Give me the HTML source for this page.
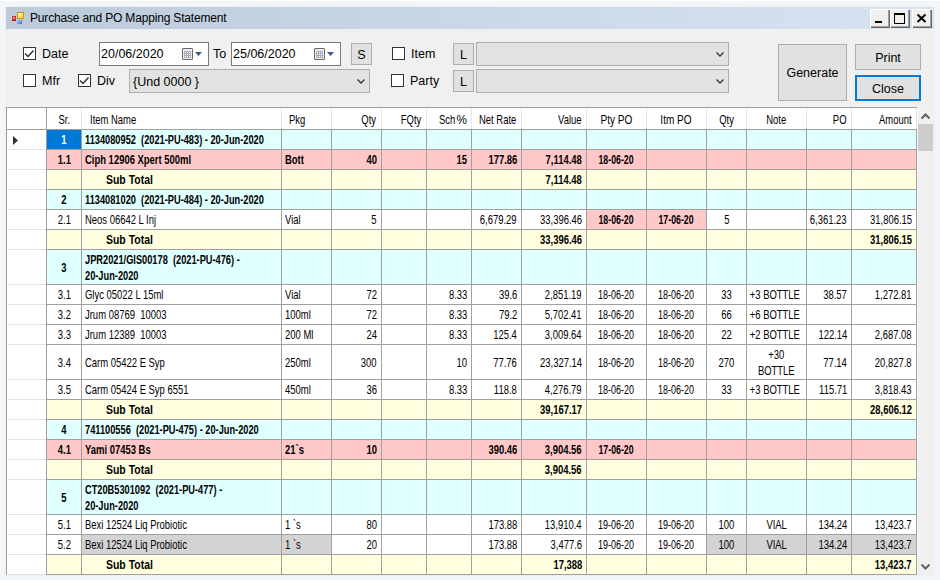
<!DOCTYPE html>
<html><head><meta charset="utf-8">
<style>
html,body{margin:0;padding:0;width:940px;height:580px;overflow:hidden;background:#f2f6fb;}
body{position:relative;font-family:"Liberation Sans", sans-serif;font-size:12px;color:#000;}
.b{position:absolute;}
.t{position:absolute;white-space:nowrap;line-height:15px;font-size:13.5px;}
.t span{display:inline-block;}
.lbl{position:absolute;white-space:nowrap;font-size:12.5px;line-height:14px;}
.ttl{position:absolute;white-space:nowrap;font-size:12px;line-height:14px;}
.cb{position:absolute;width:11px;height:11px;border:1px solid #333;background:#fff;}
.btn{position:absolute;box-sizing:border-box;border:1px solid #adadad;background:#e1e1e1;text-align:center;font-size:12.5px;}
.combo{position:absolute;box-sizing:border-box;border:1px solid #adadad;background:#e2e2e2;}
.dtp{position:absolute;box-sizing:border-box;border:1px solid #7a7a7a;background:#fff;}
</style></head><body>
<div class="b" style="left:0;top:0;width:940px;height:1px;background:#fff"></div>
<div class="b" style="left:5px;top:6px;width:930px;height:570px;background:#f0f0f0"></div>
<div class="b" style="left:6px;top:7px;width:928px;height:22px;background:linear-gradient(to right,#bccbdb,#d6e4f2)"></div>
<!-- app icon -->
<div class="b" style="left:11px;top:11px;width:12px;height:12px;border:1px solid #c8c8c8;box-sizing:content-box"></div>
<div class="b" style="left:17px;top:12px;width:7px;height:7px;background:linear-gradient(135deg,#fff4c0,#ffd21e);border:1px solid #c39a10;box-sizing:border-box"></div>
<div class="b" style="left:12px;top:16px;width:4px;height:5px;background:radial-gradient(circle at 45% 40%,#f4a0a0,#b81010 70%,#900000)"></div>
<div class="b" style="left:17px;top:20px;width:5px;height:4px;background:linear-gradient(135deg,#a8ccff,#3a70e0)"></div>
<div class="ttl" style="left:30px;top:11px;letter-spacing:-0.17px">Purchase and PO Mapping Statement</div>
<!-- window buttons -->
<div class="b" style="left:870px;top:9px;width:20px;height:19px;background:#f0f0f0;box-shadow:inset 1px 1px #fff, inset -1px -1px #696969, inset -2px -2px #a0a0a0"></div>
<div class="b" style="left:875px;top:21px;width:7px;height:2px;background:#000"></div>
<div class="b" style="left:890px;top:9px;width:20px;height:19px;background:#f0f0f0;box-shadow:inset 1px 1px #fff, inset -1px -1px #696969, inset -2px -2px #a0a0a0"></div>
<div class="b" style="left:894px;top:13px;width:9px;height:8px;border:1px solid #000;border-top-width:2px"></div>
<div class="b" style="left:912px;top:9px;width:20px;height:19px;background:#f0f0f0;box-shadow:inset 1px 1px #fff, inset -1px -1px #696969, inset -2px -2px #a0a0a0"></div>
<svg class="b" style="left:912px;top:9px" width="19" height="18"><path d="M5.5 5.5 L13.5 13 M13.5 5.5 L5.5 13" stroke="#000" stroke-width="2"/></svg>

<!-- controls row 1 -->
<div class="cb" style="left:23px;top:47px"></div>
<svg class="b" style="left:23px;top:47px" width="13" height="13"><path d="M2 6.5 L5 9.5 L10.5 3.5" stroke="#333" stroke-width="1.5" fill="none"/></svg>
<div class="lbl" style="left:42px;top:47px">Date</div>
<div class="dtp" style="left:99px;top:42px;width:110px;height:24px"></div>
<div class="lbl" style="left:101px;top:47px">20/06/2020</div>
<div class="lbl" style="left:213px;top:47px">To</div>
<div class="dtp" style="left:231px;top:42px;width:110px;height:24px"></div>
<div class="lbl" style="left:233px;top:47px">25/06/2020</div>
<div class="btn" style="left:351px;top:43px;width:21px;height:22px;line-height:22px">S</div>
<div class="cb" style="left:392px;top:47px"></div>
<div class="lbl" style="left:411px;top:47px">Item</div>
<div class="btn" style="left:453px;top:43px;width:21px;height:22px;line-height:22px">L</div>
<div class="combo" style="left:476px;top:42px;width:253px;height:24px"></div>
<div class="btn" style="left:778px;top:44px;width:69px;height:57px;line-height:57px">Generate</div>
<div class="btn" style="left:855px;top:44px;width:66px;height:26px;line-height:26px">Print</div>
<div class="btn" style="left:855px;top:75px;width:66px;height:26px;line-height:24px;border:2px solid #0078d7">Close</div>
<!-- controls row 2 -->
<div class="cb" style="left:23px;top:74px"></div>
<div class="lbl" style="left:42px;top:74px">Mfr</div>
<div class="cb" style="left:78px;top:74px"></div>
<svg class="b" style="left:78px;top:74px" width="13" height="13"><path d="M2 6.5 L5 9.5 L10.5 3.5" stroke="#333" stroke-width="1.5" fill="none"/></svg>
<div class="lbl" style="left:97px;top:74px">Div</div>
<div class="combo" style="left:129px;top:69px;width:241px;height:24px"></div>
<div class="lbl" style="left:133px;top:75px">{Und 0000 }</div>
<div class="cb" style="left:391px;top:74px"></div>
<div class="lbl" style="left:410px;top:74px">Party</div>
<div class="btn" style="left:453px;top:70px;width:21px;height:22px;line-height:22px">L</div>
<div class="combo" style="left:476px;top:69px;width:253px;height:24px"></div>

<div class="b" style="left:182px;top:48px;width:9px;height:10px;border:1px solid #6e6460;border-radius:1px;background:#eaf0f8"></div><svg class="b" style="left:184px;top:51px" width="7" height="7"><rect x="0" y="0" width="7" height="7" fill="#a9aeb6"/><rect x="1" y="1" width="1" height="1" fill="#fff"/><rect x="1" y="3" width="1" height="1" fill="#fff"/><rect x="1" y="5" width="1" height="1" fill="#fff"/><rect x="3" y="1" width="1" height="1" fill="#fff"/><rect x="3" y="3" width="1" height="1" fill="#fff"/><rect x="3" y="5" width="1" height="1" fill="#fff"/><rect x="5" y="1" width="1" height="1" fill="#fff"/><rect x="5" y="3" width="1" height="1" fill="#fff"/><rect x="5" y="5" width="1" height="1" fill="#fff"/></svg><svg class="b" style="left:195px;top:52px" width="7" height="4"><path d="M0 0 H7 L3.5 4 Z" fill="#3c5a8c"/></svg><div class="b" style="left:314px;top:48px;width:9px;height:10px;border:1px solid #6e6460;border-radius:1px;background:#eaf0f8"></div><svg class="b" style="left:316px;top:51px" width="7" height="7"><rect x="0" y="0" width="7" height="7" fill="#a9aeb6"/><rect x="1" y="1" width="1" height="1" fill="#fff"/><rect x="1" y="3" width="1" height="1" fill="#fff"/><rect x="1" y="5" width="1" height="1" fill="#fff"/><rect x="3" y="1" width="1" height="1" fill="#fff"/><rect x="3" y="3" width="1" height="1" fill="#fff"/><rect x="3" y="5" width="1" height="1" fill="#fff"/><rect x="5" y="1" width="1" height="1" fill="#fff"/><rect x="5" y="3" width="1" height="1" fill="#fff"/><rect x="5" y="5" width="1" height="1" fill="#fff"/></svg><svg class="b" style="left:327px;top:52px" width="7" height="4"><path d="M0 0 H7 L3.5 4 Z" fill="#3c5a8c"/></svg><svg class="b" style="left:715px;top:51px" width="10" height="7"><path d="M1.5 1.5 L5 5 L8.5 1.5" stroke="#333" stroke-width="1.25" fill="none"/></svg><svg class="b" style="left:715px;top:78px" width="10" height="7"><path d="M1.5 1.5 L5 5 L8.5 1.5" stroke="#333" stroke-width="1.25" fill="none"/></svg><svg class="b" style="left:356px;top:78px" width="10" height="7"><path d="M1.5 1.5 L5 5 L8.5 1.5" stroke="#333" stroke-width="1.25" fill="none"/></svg>
<div style="position:absolute;left:6px;top:107px;width:911px;height:468px;background:#fff"></div>
<div class="b" style="left:47px;top:130px;width:869px;height:19px;background:#e0ffff"></div>
<div class="b" style="left:47px;top:130px;width:34px;height:19px;background:#0078d7"></div>
<div class="t" style="left:-136.0px;width:400px;text-align:center;top:132.0px;line-height:15px;font-weight:700;color:#fff"><span style="transform:scaleX(0.7);transform-origin:center">1</span></div>
<div class="t" style="left:85px;top:132.0px;line-height:15px;font-weight:700;color:#000"><span style="transform:scaleX(0.685);transform-origin:left">1134080952&nbsp; (2021-PU-483) - 20-Jun-2020</span></div>
<div class="b" style="left:46px;top:149px;width:871px;height:1px;background:#a0a0a0"></div>
<div class="b" style="left:8px;top:149px;width:38px;height:1px;background:#e3e3e3"></div>
<div class="b" style="left:47px;top:150px;width:869px;height:19px;background:#ffc8c8"></div>
<div class="t" style="left:-136.0px;width:400px;text-align:center;top:152.0px;line-height:15px;font-weight:700;color:#000"><span style="transform:scaleX(0.7);transform-origin:center">1.1</span></div>
<div class="t" style="left:85px;top:152.0px;line-height:15px;font-weight:700;color:#000"><span style="transform:scaleX(0.7);transform-origin:left">Ciph 12906 Xpert 500ml</span></div>
<div class="t" style="left:285px;top:152.0px;line-height:15px;font-weight:700;color:#000"><span style="transform:scaleX(0.7);transform-origin:left">Bott</span></div>
<div class="t" style="right:563px;top:152.0px;line-height:15px;font-weight:700;color:#000"><span style="transform:scaleX(0.7);transform-origin:right">40</span></div>
<div class="t" style="right:473px;top:152.0px;line-height:15px;font-weight:700;color:#000"><span style="transform:scaleX(0.7);transform-origin:right">15</span></div>
<div class="t" style="right:423px;top:152.0px;line-height:15px;font-weight:700;color:#000"><span style="transform:scaleX(0.7);transform-origin:right">177.86</span></div>
<div class="t" style="right:358px;top:152.0px;line-height:15px;font-weight:700;color:#000"><span style="transform:scaleX(0.7);transform-origin:right">7,114.48</span></div>
<div class="t" style="left:416.5px;width:400px;text-align:center;top:152.0px;line-height:15px;font-weight:700;color:#000"><span style="transform:scaleX(0.65);transform-origin:center">18-06-20</span></div>
<div class="b" style="left:46px;top:169px;width:871px;height:1px;background:#a0a0a0"></div>
<div class="b" style="left:8px;top:169px;width:38px;height:1px;background:#e3e3e3"></div>
<div class="b" style="left:47px;top:170px;width:869px;height:19px;background:#ffffe0"></div>
<div class="t" style="left:106px;top:172.0px;line-height:15px;font-weight:700;color:#000"><span style="transform:scaleX(0.775);transform-origin:left">Sub Total</span></div>
<div class="t" style="right:358px;top:172.0px;line-height:15px;font-weight:700;color:#000"><span style="transform:scaleX(0.7);transform-origin:right">7,114.48</span></div>
<div class="b" style="left:46px;top:189px;width:871px;height:1px;background:#a0a0a0"></div>
<div class="b" style="left:8px;top:189px;width:38px;height:1px;background:#e3e3e3"></div>
<div class="b" style="left:47px;top:190px;width:869px;height:19px;background:#e0ffff"></div>
<div class="t" style="left:-136.0px;width:400px;text-align:center;top:192.0px;line-height:15px;font-weight:700;color:#000"><span style="transform:scaleX(0.7);transform-origin:center">2</span></div>
<div class="t" style="left:85px;top:192.0px;line-height:15px;font-weight:700;color:#000"><span style="transform:scaleX(0.685);transform-origin:left">1134081020&nbsp; (2021-PU-484) - 20-Jun-2020</span></div>
<div class="b" style="left:46px;top:209px;width:871px;height:1px;background:#a0a0a0"></div>
<div class="b" style="left:8px;top:209px;width:38px;height:1px;background:#e3e3e3"></div>
<div class="b" style="left:47px;top:210px;width:869px;height:19px;background:#ffffff"></div>
<div class="b" style="left:587px;top:210px;width:59px;height:19px;background:#ffc8c8"></div>
<div class="b" style="left:647px;top:210px;width:59px;height:19px;background:#ffc8c8"></div>
<div class="t" style="left:-136.0px;width:400px;text-align:center;top:212.0px;line-height:15px;font-weight:400;color:#000"><span style="transform:scaleX(0.7);transform-origin:center">2.1</span></div>
<div class="t" style="left:85px;top:212.0px;line-height:15px;font-weight:400;color:#000"><span style="transform:scaleX(0.7);transform-origin:left">Neos 06642 L Inj</span></div>
<div class="t" style="left:285px;top:212.0px;line-height:15px;font-weight:400;color:#000"><span style="transform:scaleX(0.7);transform-origin:left">Vial</span></div>
<div class="t" style="right:563px;top:212.0px;line-height:15px;font-weight:400;color:#000"><span style="transform:scaleX(0.7);transform-origin:right">5</span></div>
<div class="t" style="right:423px;top:212.0px;line-height:15px;font-weight:400;color:#000"><span style="transform:scaleX(0.7);transform-origin:right">6,679.29</span></div>
<div class="t" style="right:358px;top:212.0px;line-height:15px;font-weight:400;color:#000"><span style="transform:scaleX(0.7);transform-origin:right">33,396.46</span></div>
<div class="t" style="left:416.5px;width:400px;text-align:center;top:212.0px;line-height:15px;font-weight:700;color:#000"><span style="transform:scaleX(0.65);transform-origin:center">18-06-20</span></div>
<div class="t" style="left:476.5px;width:400px;text-align:center;top:212.0px;line-height:15px;font-weight:700;color:#000"><span style="transform:scaleX(0.65);transform-origin:center">17-06-20</span></div>
<div class="t" style="left:526.5px;width:400px;text-align:center;top:212.0px;line-height:15px;font-weight:400;color:#000"><span style="transform:scaleX(0.7);transform-origin:center">5</span></div>
<div class="t" style="right:93px;top:212.0px;line-height:15px;font-weight:400;color:#000"><span style="transform:scaleX(0.7);transform-origin:right">6,361.23</span></div>
<div class="t" style="right:28px;top:212.0px;line-height:15px;font-weight:400;color:#000"><span style="transform:scaleX(0.7);transform-origin:right">31,806.15</span></div>
<div class="b" style="left:46px;top:229px;width:871px;height:1px;background:#a0a0a0"></div>
<div class="b" style="left:8px;top:229px;width:38px;height:1px;background:#e3e3e3"></div>
<div class="b" style="left:47px;top:230px;width:869px;height:19px;background:#ffffe0"></div>
<div class="t" style="left:106px;top:232.0px;line-height:15px;font-weight:700;color:#000"><span style="transform:scaleX(0.775);transform-origin:left">Sub Total</span></div>
<div class="t" style="right:358px;top:232.0px;line-height:15px;font-weight:700;color:#000"><span style="transform:scaleX(0.7);transform-origin:right">33,396.46</span></div>
<div class="t" style="right:28px;top:232.0px;line-height:15px;font-weight:700;color:#000"><span style="transform:scaleX(0.7);transform-origin:right">31,806.15</span></div>
<div class="b" style="left:46px;top:249px;width:871px;height:1px;background:#a0a0a0"></div>
<div class="b" style="left:8px;top:249px;width:38px;height:1px;background:#e3e3e3"></div>
<div class="b" style="left:47px;top:250px;width:869px;height:34px;background:#e0ffff"></div>
<div class="t" style="left:-136.0px;width:400px;text-align:center;top:259.5px;line-height:15px;font-weight:700;color:#000"><span style="transform:scaleX(0.7);transform-origin:center">3</span></div>
<div class="t" style="left:85px;top:252.0px;line-height:16px;font-weight:700;color:#000"><span style="transform:scaleX(0.685);transform-origin:left">JPR2021/GIS00178&nbsp; (2021-PU-476) -<br>20-Jun-2020</span></div>
<div class="b" style="left:46px;top:284px;width:871px;height:1px;background:#a0a0a0"></div>
<div class="b" style="left:8px;top:284px;width:38px;height:1px;background:#e3e3e3"></div>
<div class="b" style="left:47px;top:285px;width:869px;height:19px;background:#ffffff"></div>
<div class="t" style="left:-136.0px;width:400px;text-align:center;top:287.0px;line-height:15px;font-weight:400;color:#000"><span style="transform:scaleX(0.7);transform-origin:center">3.1</span></div>
<div class="t" style="left:85px;top:287.0px;line-height:15px;font-weight:400;color:#000"><span style="transform:scaleX(0.7);transform-origin:left">Glyc 05022 L 15ml</span></div>
<div class="t" style="left:285px;top:287.0px;line-height:15px;font-weight:400;color:#000"><span style="transform:scaleX(0.7);transform-origin:left">Vial</span></div>
<div class="t" style="right:563px;top:287.0px;line-height:15px;font-weight:400;color:#000"><span style="transform:scaleX(0.7);transform-origin:right">72</span></div>
<div class="t" style="right:473px;top:287.0px;line-height:15px;font-weight:400;color:#000"><span style="transform:scaleX(0.7);transform-origin:right">8.33</span></div>
<div class="t" style="right:423px;top:287.0px;line-height:15px;font-weight:400;color:#000"><span style="transform:scaleX(0.7);transform-origin:right">39.6</span></div>
<div class="t" style="right:358px;top:287.0px;line-height:15px;font-weight:400;color:#000"><span style="transform:scaleX(0.7);transform-origin:right">2,851.19</span></div>
<div class="t" style="left:416.5px;width:400px;text-align:center;top:287.0px;line-height:15px;font-weight:400;color:#000"><span style="transform:scaleX(0.665);transform-origin:center">18-06-20</span></div>
<div class="t" style="left:476.5px;width:400px;text-align:center;top:287.0px;line-height:15px;font-weight:400;color:#000"><span style="transform:scaleX(0.665);transform-origin:center">18-06-20</span></div>
<div class="t" style="left:526.5px;width:400px;text-align:center;top:287.0px;line-height:15px;font-weight:400;color:#000"><span style="transform:scaleX(0.7);transform-origin:center">33</span></div>
<div class="t" style="left:574.5px;width:400px;text-align:center;top:287.0px;line-height:15px;font-weight:400;color:#000"><span style="transform:scaleX(0.7);transform-origin:center">+3 BOTTLE</span></div>
<div class="t" style="right:93px;top:287.0px;line-height:15px;font-weight:400;color:#000"><span style="transform:scaleX(0.7);transform-origin:right">38.57</span></div>
<div class="t" style="right:28px;top:287.0px;line-height:15px;font-weight:400;color:#000"><span style="transform:scaleX(0.7);transform-origin:right">1,272.81</span></div>
<div class="b" style="left:46px;top:304px;width:871px;height:1px;background:#a0a0a0"></div>
<div class="b" style="left:8px;top:304px;width:38px;height:1px;background:#e3e3e3"></div>
<div class="b" style="left:47px;top:305px;width:869px;height:19px;background:#ffffff"></div>
<div class="t" style="left:-136.0px;width:400px;text-align:center;top:307.0px;line-height:15px;font-weight:400;color:#000"><span style="transform:scaleX(0.7);transform-origin:center">3.2</span></div>
<div class="t" style="left:85px;top:307.0px;line-height:15px;font-weight:400;color:#000"><span style="transform:scaleX(0.7);transform-origin:left">Jrum 08769&nbsp; 10003</span></div>
<div class="t" style="left:285px;top:307.0px;line-height:15px;font-weight:400;color:#000"><span style="transform:scaleX(0.7);transform-origin:left">100ml</span></div>
<div class="t" style="right:563px;top:307.0px;line-height:15px;font-weight:400;color:#000"><span style="transform:scaleX(0.7);transform-origin:right">72</span></div>
<div class="t" style="right:473px;top:307.0px;line-height:15px;font-weight:400;color:#000"><span style="transform:scaleX(0.7);transform-origin:right">8.33</span></div>
<div class="t" style="right:423px;top:307.0px;line-height:15px;font-weight:400;color:#000"><span style="transform:scaleX(0.7);transform-origin:right">79.2</span></div>
<div class="t" style="right:358px;top:307.0px;line-height:15px;font-weight:400;color:#000"><span style="transform:scaleX(0.7);transform-origin:right">5,702.41</span></div>
<div class="t" style="left:416.5px;width:400px;text-align:center;top:307.0px;line-height:15px;font-weight:400;color:#000"><span style="transform:scaleX(0.665);transform-origin:center">18-06-20</span></div>
<div class="t" style="left:476.5px;width:400px;text-align:center;top:307.0px;line-height:15px;font-weight:400;color:#000"><span style="transform:scaleX(0.665);transform-origin:center">18-06-20</span></div>
<div class="t" style="left:526.5px;width:400px;text-align:center;top:307.0px;line-height:15px;font-weight:400;color:#000"><span style="transform:scaleX(0.7);transform-origin:center">66</span></div>
<div class="t" style="left:574.5px;width:400px;text-align:center;top:307.0px;line-height:15px;font-weight:400;color:#000"><span style="transform:scaleX(0.7);transform-origin:center">+6 BOTTLE</span></div>
<div class="b" style="left:46px;top:324px;width:871px;height:1px;background:#a0a0a0"></div>
<div class="b" style="left:8px;top:324px;width:38px;height:1px;background:#e3e3e3"></div>
<div class="b" style="left:47px;top:325px;width:869px;height:19px;background:#ffffff"></div>
<div class="t" style="left:-136.0px;width:400px;text-align:center;top:327.0px;line-height:15px;font-weight:400;color:#000"><span style="transform:scaleX(0.7);transform-origin:center">3.3</span></div>
<div class="t" style="left:85px;top:327.0px;line-height:15px;font-weight:400;color:#000"><span style="transform:scaleX(0.7);transform-origin:left">Jrum 12389&nbsp; 10003</span></div>
<div class="t" style="left:285px;top:327.0px;line-height:15px;font-weight:400;color:#000"><span style="transform:scaleX(0.7);transform-origin:left">200 Ml</span></div>
<div class="t" style="right:563px;top:327.0px;line-height:15px;font-weight:400;color:#000"><span style="transform:scaleX(0.7);transform-origin:right">24</span></div>
<div class="t" style="right:473px;top:327.0px;line-height:15px;font-weight:400;color:#000"><span style="transform:scaleX(0.7);transform-origin:right">8.33</span></div>
<div class="t" style="right:423px;top:327.0px;line-height:15px;font-weight:400;color:#000"><span style="transform:scaleX(0.7);transform-origin:right">125.4</span></div>
<div class="t" style="right:358px;top:327.0px;line-height:15px;font-weight:400;color:#000"><span style="transform:scaleX(0.7);transform-origin:right">3,009.64</span></div>
<div class="t" style="left:416.5px;width:400px;text-align:center;top:327.0px;line-height:15px;font-weight:400;color:#000"><span style="transform:scaleX(0.665);transform-origin:center">18-06-20</span></div>
<div class="t" style="left:476.5px;width:400px;text-align:center;top:327.0px;line-height:15px;font-weight:400;color:#000"><span style="transform:scaleX(0.665);transform-origin:center">18-06-20</span></div>
<div class="t" style="left:526.5px;width:400px;text-align:center;top:327.0px;line-height:15px;font-weight:400;color:#000"><span style="transform:scaleX(0.7);transform-origin:center">22</span></div>
<div class="t" style="left:574.5px;width:400px;text-align:center;top:327.0px;line-height:15px;font-weight:400;color:#000"><span style="transform:scaleX(0.7);transform-origin:center">+2 BOTTLE</span></div>
<div class="t" style="right:93px;top:327.0px;line-height:15px;font-weight:400;color:#000"><span style="transform:scaleX(0.7);transform-origin:right">122.14</span></div>
<div class="t" style="right:28px;top:327.0px;line-height:15px;font-weight:400;color:#000"><span style="transform:scaleX(0.7);transform-origin:right">2,687.08</span></div>
<div class="b" style="left:46px;top:344px;width:871px;height:1px;background:#a0a0a0"></div>
<div class="b" style="left:8px;top:344px;width:38px;height:1px;background:#e3e3e3"></div>
<div class="b" style="left:47px;top:345px;width:869px;height:34px;background:#ffffff"></div>
<div class="t" style="left:-136.0px;width:400px;text-align:center;top:354.5px;line-height:15px;font-weight:400;color:#000"><span style="transform:scaleX(0.7);transform-origin:center">3.4</span></div>
<div class="t" style="left:85px;top:354.5px;line-height:15px;font-weight:400;color:#000"><span style="transform:scaleX(0.7);transform-origin:left">Carm 05422 E Syp</span></div>
<div class="t" style="left:285px;top:354.5px;line-height:15px;font-weight:400;color:#000"><span style="transform:scaleX(0.7);transform-origin:left">250ml</span></div>
<div class="t" style="right:563px;top:354.5px;line-height:15px;font-weight:400;color:#000"><span style="transform:scaleX(0.7);transform-origin:right">300</span></div>
<div class="t" style="right:473px;top:354.5px;line-height:15px;font-weight:400;color:#000"><span style="transform:scaleX(0.7);transform-origin:right">10</span></div>
<div class="t" style="right:423px;top:354.5px;line-height:15px;font-weight:400;color:#000"><span style="transform:scaleX(0.7);transform-origin:right">77.76</span></div>
<div class="t" style="right:358px;top:354.5px;line-height:15px;font-weight:400;color:#000"><span style="transform:scaleX(0.7);transform-origin:right">23,327.14</span></div>
<div class="t" style="left:416.5px;width:400px;text-align:center;top:354.5px;line-height:15px;font-weight:400;color:#000"><span style="transform:scaleX(0.665);transform-origin:center">18-06-20</span></div>
<div class="t" style="left:476.5px;width:400px;text-align:center;top:354.5px;line-height:15px;font-weight:400;color:#000"><span style="transform:scaleX(0.665);transform-origin:center">18-06-20</span></div>
<div class="t" style="left:526.5px;width:400px;text-align:center;top:354.5px;line-height:15px;font-weight:400;color:#000"><span style="transform:scaleX(0.7);transform-origin:center">270</span></div>
<div class="t" style="left:576.5px;width:400px;text-align:center;top:347.0px;line-height:16px;font-weight:400;color:#000"><span style="transform:scaleX(0.7);transform-origin:center">+30<br>BOTTLE</span></div>
<div class="t" style="right:93px;top:354.5px;line-height:15px;font-weight:400;color:#000"><span style="transform:scaleX(0.7);transform-origin:right">77.14</span></div>
<div class="t" style="right:28px;top:354.5px;line-height:15px;font-weight:400;color:#000"><span style="transform:scaleX(0.7);transform-origin:right">20,827.8</span></div>
<div class="b" style="left:46px;top:379px;width:871px;height:1px;background:#a0a0a0"></div>
<div class="b" style="left:8px;top:379px;width:38px;height:1px;background:#e3e3e3"></div>
<div class="b" style="left:47px;top:380px;width:869px;height:19px;background:#ffffff"></div>
<div class="t" style="left:-136.0px;width:400px;text-align:center;top:382.0px;line-height:15px;font-weight:400;color:#000"><span style="transform:scaleX(0.7);transform-origin:center">3.5</span></div>
<div class="t" style="left:85px;top:382.0px;line-height:15px;font-weight:400;color:#000"><span style="transform:scaleX(0.7);transform-origin:left">Carm 05424 E Syp 6551</span></div>
<div class="t" style="left:285px;top:382.0px;line-height:15px;font-weight:400;color:#000"><span style="transform:scaleX(0.7);transform-origin:left">450ml</span></div>
<div class="t" style="right:563px;top:382.0px;line-height:15px;font-weight:400;color:#000"><span style="transform:scaleX(0.7);transform-origin:right">36</span></div>
<div class="t" style="right:473px;top:382.0px;line-height:15px;font-weight:400;color:#000"><span style="transform:scaleX(0.7);transform-origin:right">8.33</span></div>
<div class="t" style="right:423px;top:382.0px;line-height:15px;font-weight:400;color:#000"><span style="transform:scaleX(0.7);transform-origin:right">118.8</span></div>
<div class="t" style="right:358px;top:382.0px;line-height:15px;font-weight:400;color:#000"><span style="transform:scaleX(0.7);transform-origin:right">4,276.79</span></div>
<div class="t" style="left:416.5px;width:400px;text-align:center;top:382.0px;line-height:15px;font-weight:400;color:#000"><span style="transform:scaleX(0.665);transform-origin:center">18-06-20</span></div>
<div class="t" style="left:476.5px;width:400px;text-align:center;top:382.0px;line-height:15px;font-weight:400;color:#000"><span style="transform:scaleX(0.665);transform-origin:center">18-06-20</span></div>
<div class="t" style="left:526.5px;width:400px;text-align:center;top:382.0px;line-height:15px;font-weight:400;color:#000"><span style="transform:scaleX(0.7);transform-origin:center">33</span></div>
<div class="t" style="left:574.5px;width:400px;text-align:center;top:382.0px;line-height:15px;font-weight:400;color:#000"><span style="transform:scaleX(0.7);transform-origin:center">+3 BOTTLE</span></div>
<div class="t" style="right:93px;top:382.0px;line-height:15px;font-weight:400;color:#000"><span style="transform:scaleX(0.7);transform-origin:right">115.71</span></div>
<div class="t" style="right:28px;top:382.0px;line-height:15px;font-weight:400;color:#000"><span style="transform:scaleX(0.7);transform-origin:right">3,818.43</span></div>
<div class="b" style="left:46px;top:399px;width:871px;height:1px;background:#a0a0a0"></div>
<div class="b" style="left:8px;top:399px;width:38px;height:1px;background:#e3e3e3"></div>
<div class="b" style="left:47px;top:400px;width:869px;height:19px;background:#ffffe0"></div>
<div class="t" style="left:106px;top:402.0px;line-height:15px;font-weight:700;color:#000"><span style="transform:scaleX(0.775);transform-origin:left">Sub Total</span></div>
<div class="t" style="right:358px;top:402.0px;line-height:15px;font-weight:700;color:#000"><span style="transform:scaleX(0.7);transform-origin:right">39,167.17</span></div>
<div class="t" style="right:28px;top:402.0px;line-height:15px;font-weight:700;color:#000"><span style="transform:scaleX(0.7);transform-origin:right">28,606.12</span></div>
<div class="b" style="left:46px;top:419px;width:871px;height:1px;background:#a0a0a0"></div>
<div class="b" style="left:8px;top:419px;width:38px;height:1px;background:#e3e3e3"></div>
<div class="b" style="left:47px;top:420px;width:869px;height:19px;background:#e0ffff"></div>
<div class="t" style="left:-136.0px;width:400px;text-align:center;top:422.0px;line-height:15px;font-weight:700;color:#000"><span style="transform:scaleX(0.7);transform-origin:center">4</span></div>
<div class="t" style="left:85px;top:422.0px;line-height:15px;font-weight:700;color:#000"><span style="transform:scaleX(0.685);transform-origin:left">741100556&nbsp; (2021-PU-475) - 20-Jun-2020</span></div>
<div class="b" style="left:46px;top:439px;width:871px;height:1px;background:#a0a0a0"></div>
<div class="b" style="left:8px;top:439px;width:38px;height:1px;background:#e3e3e3"></div>
<div class="b" style="left:47px;top:440px;width:869px;height:19px;background:#ffc8c8"></div>
<div class="t" style="left:-136.0px;width:400px;text-align:center;top:442.0px;line-height:15px;font-weight:700;color:#000"><span style="transform:scaleX(0.7);transform-origin:center">4.1</span></div>
<div class="t" style="left:85px;top:442.0px;line-height:15px;font-weight:700;color:#000"><span style="transform:scaleX(0.7);transform-origin:left">Yami 07453 Bs</span></div>
<div class="t" style="left:285px;top:442.0px;line-height:15px;font-weight:700;color:#000"><span style="transform:scaleX(0.7);transform-origin:left">21`s</span></div>
<div class="t" style="right:563px;top:442.0px;line-height:15px;font-weight:700;color:#000"><span style="transform:scaleX(0.7);transform-origin:right">10</span></div>
<div class="t" style="right:423px;top:442.0px;line-height:15px;font-weight:700;color:#000"><span style="transform:scaleX(0.7);transform-origin:right">390.46</span></div>
<div class="t" style="right:358px;top:442.0px;line-height:15px;font-weight:700;color:#000"><span style="transform:scaleX(0.7);transform-origin:right">3,904.56</span></div>
<div class="t" style="left:416.5px;width:400px;text-align:center;top:442.0px;line-height:15px;font-weight:700;color:#000"><span style="transform:scaleX(0.65);transform-origin:center">17-06-20</span></div>
<div class="b" style="left:46px;top:459px;width:871px;height:1px;background:#a0a0a0"></div>
<div class="b" style="left:8px;top:459px;width:38px;height:1px;background:#e3e3e3"></div>
<div class="b" style="left:47px;top:460px;width:869px;height:19px;background:#ffffe0"></div>
<div class="t" style="left:106px;top:462.0px;line-height:15px;font-weight:700;color:#000"><span style="transform:scaleX(0.775);transform-origin:left">Sub Total</span></div>
<div class="t" style="right:358px;top:462.0px;line-height:15px;font-weight:700;color:#000"><span style="transform:scaleX(0.7);transform-origin:right">3,904.56</span></div>
<div class="b" style="left:46px;top:479px;width:871px;height:1px;background:#a0a0a0"></div>
<div class="b" style="left:8px;top:479px;width:38px;height:1px;background:#e3e3e3"></div>
<div class="b" style="left:47px;top:480px;width:869px;height:34px;background:#e0ffff"></div>
<div class="t" style="left:-136.0px;width:400px;text-align:center;top:489.5px;line-height:15px;font-weight:700;color:#000"><span style="transform:scaleX(0.7);transform-origin:center">5</span></div>
<div class="t" style="left:85px;top:482.0px;line-height:16px;font-weight:700;color:#000"><span style="transform:scaleX(0.685);transform-origin:left">CT20B5301092&nbsp; (2021-PU-477) -<br>20-Jun-2020</span></div>
<div class="b" style="left:46px;top:514px;width:871px;height:1px;background:#a0a0a0"></div>
<div class="b" style="left:8px;top:514px;width:38px;height:1px;background:#e3e3e3"></div>
<div class="b" style="left:47px;top:515px;width:869px;height:19px;background:#ffffff"></div>
<div class="t" style="left:-136.0px;width:400px;text-align:center;top:517.0px;line-height:15px;font-weight:400;color:#000"><span style="transform:scaleX(0.7);transform-origin:center">5.1</span></div>
<div class="t" style="left:85px;top:517.0px;line-height:15px;font-weight:400;color:#000"><span style="transform:scaleX(0.7);transform-origin:left">Bexi 12524 Liq Probiotic</span></div>
<div class="t" style="left:285px;top:517.0px;line-height:15px;font-weight:400;color:#000"><span style="transform:scaleX(0.7);transform-origin:left">1 `s</span></div>
<div class="t" style="right:563px;top:517.0px;line-height:15px;font-weight:400;color:#000"><span style="transform:scaleX(0.7);transform-origin:right">80</span></div>
<div class="t" style="right:423px;top:517.0px;line-height:15px;font-weight:400;color:#000"><span style="transform:scaleX(0.7);transform-origin:right">173.88</span></div>
<div class="t" style="right:358px;top:517.0px;line-height:15px;font-weight:400;color:#000"><span style="transform:scaleX(0.7);transform-origin:right">13,910.4</span></div>
<div class="t" style="left:416.5px;width:400px;text-align:center;top:517.0px;line-height:15px;font-weight:400;color:#000"><span style="transform:scaleX(0.665);transform-origin:center">19-06-20</span></div>
<div class="t" style="left:476.5px;width:400px;text-align:center;top:517.0px;line-height:15px;font-weight:400;color:#000"><span style="transform:scaleX(0.665);transform-origin:center">19-06-20</span></div>
<div class="t" style="left:526.5px;width:400px;text-align:center;top:517.0px;line-height:15px;font-weight:400;color:#000"><span style="transform:scaleX(0.7);transform-origin:center">100</span></div>
<div class="t" style="left:576.5px;width:400px;text-align:center;top:517.0px;line-height:15px;font-weight:400;color:#000"><span style="transform:scaleX(0.7);transform-origin:center">VIAL</span></div>
<div class="t" style="right:93px;top:517.0px;line-height:15px;font-weight:400;color:#000"><span style="transform:scaleX(0.7);transform-origin:right">134.24</span></div>
<div class="t" style="right:28px;top:517.0px;line-height:15px;font-weight:400;color:#000"><span style="transform:scaleX(0.7);transform-origin:right">13,423.7</span></div>
<div class="b" style="left:46px;top:534px;width:871px;height:1px;background:#a0a0a0"></div>
<div class="b" style="left:8px;top:534px;width:38px;height:1px;background:#e3e3e3"></div>
<div class="b" style="left:47px;top:535px;width:869px;height:19px;background:#ffffff"></div>
<div class="b" style="left:82px;top:535px;width:199px;height:19px;background:#d3d3d3"></div>
<div class="b" style="left:282px;top:535px;width:49px;height:19px;background:#d3d3d3"></div>
<div class="b" style="left:707px;top:535px;width:39px;height:19px;background:#d3d3d3"></div>
<div class="b" style="left:747px;top:535px;width:59px;height:19px;background:#d3d3d3"></div>
<div class="b" style="left:807px;top:535px;width:44px;height:19px;background:#d3d3d3"></div>
<div class="b" style="left:852px;top:535px;width:64px;height:19px;background:#d3d3d3"></div>
<div class="t" style="left:-136.0px;width:400px;text-align:center;top:537.0px;line-height:15px;font-weight:400;color:#000"><span style="transform:scaleX(0.7);transform-origin:center">5.2</span></div>
<div class="t" style="left:85px;top:537.0px;line-height:15px;font-weight:400;color:#000"><span style="transform:scaleX(0.7);transform-origin:left">Bexi 12524 Liq Probiotic</span></div>
<div class="t" style="left:285px;top:537.0px;line-height:15px;font-weight:400;color:#000"><span style="transform:scaleX(0.7);transform-origin:left">1 `s</span></div>
<div class="t" style="right:563px;top:537.0px;line-height:15px;font-weight:400;color:#000"><span style="transform:scaleX(0.7);transform-origin:right">20</span></div>
<div class="t" style="right:423px;top:537.0px;line-height:15px;font-weight:400;color:#000"><span style="transform:scaleX(0.7);transform-origin:right">173.88</span></div>
<div class="t" style="right:358px;top:537.0px;line-height:15px;font-weight:400;color:#000"><span style="transform:scaleX(0.7);transform-origin:right">3,477.6</span></div>
<div class="t" style="left:416.5px;width:400px;text-align:center;top:537.0px;line-height:15px;font-weight:400;color:#000"><span style="transform:scaleX(0.665);transform-origin:center">19-06-20</span></div>
<div class="t" style="left:476.5px;width:400px;text-align:center;top:537.0px;line-height:15px;font-weight:400;color:#000"><span style="transform:scaleX(0.665);transform-origin:center">19-06-20</span></div>
<div class="t" style="left:526.5px;width:400px;text-align:center;top:537.0px;line-height:15px;font-weight:400;color:#000"><span style="transform:scaleX(0.7);transform-origin:center">100</span></div>
<div class="t" style="left:576.5px;width:400px;text-align:center;top:537.0px;line-height:15px;font-weight:400;color:#000"><span style="transform:scaleX(0.7);transform-origin:center">VIAL</span></div>
<div class="t" style="right:93px;top:537.0px;line-height:15px;font-weight:400;color:#000"><span style="transform:scaleX(0.7);transform-origin:right">134.24</span></div>
<div class="t" style="right:28px;top:537.0px;line-height:15px;font-weight:400;color:#000"><span style="transform:scaleX(0.7);transform-origin:right">13,423.7</span></div>
<div class="b" style="left:46px;top:554px;width:871px;height:1px;background:#a0a0a0"></div>
<div class="b" style="left:8px;top:554px;width:38px;height:1px;background:#e3e3e3"></div>
<div class="b" style="left:47px;top:555px;width:869px;height:19px;background:#ffffe0"></div>
<div class="t" style="left:106px;top:557.0px;line-height:15px;font-weight:700;color:#000"><span style="transform:scaleX(0.775);transform-origin:left">Sub Total</span></div>
<div class="t" style="right:358px;top:557.0px;line-height:15px;font-weight:700;color:#000"><span style="transform:scaleX(0.7);transform-origin:right">17,388</span></div>
<div class="t" style="right:28px;top:557.0px;line-height:15px;font-weight:700;color:#000"><span style="transform:scaleX(0.7);transform-origin:right">13,423.7</span></div>
<div class="b" style="left:46px;top:574px;width:871px;height:1px;background:#a0a0a0"></div>
<div class="b" style="left:8px;top:574px;width:38px;height:1px;background:#e3e3e3"></div>
<div class="b" style="left:46px;top:129px;width:1px;height:446px;background:#a0a0a0"></div>
<div class="b" style="left:81px;top:129px;width:1px;height:446px;background:#a0a0a0"></div>
<div class="b" style="left:281px;top:129px;width:1px;height:446px;background:#a0a0a0"></div>
<div class="b" style="left:331px;top:129px;width:1px;height:446px;background:#a0a0a0"></div>
<div class="b" style="left:381px;top:129px;width:1px;height:446px;background:#a0a0a0"></div>
<div class="b" style="left:426px;top:129px;width:1px;height:446px;background:#a0a0a0"></div>
<div class="b" style="left:471px;top:129px;width:1px;height:446px;background:#a0a0a0"></div>
<div class="b" style="left:521px;top:129px;width:1px;height:446px;background:#a0a0a0"></div>
<div class="b" style="left:586px;top:129px;width:1px;height:446px;background:#a0a0a0"></div>
<div class="b" style="left:646px;top:129px;width:1px;height:446px;background:#a0a0a0"></div>
<div class="b" style="left:706px;top:129px;width:1px;height:446px;background:#a0a0a0"></div>
<div class="b" style="left:746px;top:129px;width:1px;height:446px;background:#a0a0a0"></div>
<div class="b" style="left:806px;top:129px;width:1px;height:446px;background:#a0a0a0"></div>
<div class="b" style="left:851px;top:129px;width:1px;height:446px;background:#a0a0a0"></div>
<div class="b" style="left:916px;top:129px;width:1px;height:446px;background:#a0a0a0"></div>
<div class="b" style="left:81px;top:108px;width:1px;height:21px;background:#e5e5e5"></div>
<div class="b" style="left:281px;top:108px;width:1px;height:21px;background:#e5e5e5"></div>
<div class="b" style="left:331px;top:108px;width:1px;height:21px;background:#e5e5e5"></div>
<div class="b" style="left:381px;top:108px;width:1px;height:21px;background:#e5e5e5"></div>
<div class="b" style="left:426px;top:108px;width:1px;height:21px;background:#e5e5e5"></div>
<div class="b" style="left:471px;top:108px;width:1px;height:21px;background:#e5e5e5"></div>
<div class="b" style="left:521px;top:108px;width:1px;height:21px;background:#e5e5e5"></div>
<div class="b" style="left:586px;top:108px;width:1px;height:21px;background:#e5e5e5"></div>
<div class="b" style="left:646px;top:108px;width:1px;height:21px;background:#e5e5e5"></div>
<div class="b" style="left:706px;top:108px;width:1px;height:21px;background:#e5e5e5"></div>
<div class="b" style="left:746px;top:108px;width:1px;height:21px;background:#e5e5e5"></div>
<div class="b" style="left:806px;top:108px;width:1px;height:21px;background:#e5e5e5"></div>
<div class="b" style="left:851px;top:108px;width:1px;height:21px;background:#e5e5e5"></div>
<div class="b" style="left:46px;top:108px;width:1px;height:21px;background:#a0a0a0"></div>
<div class="b" style="left:916px;top:108px;width:1px;height:21px;background:#e5e5e5"></div>
<div class="t" style="left:-136.0px;width:400px;text-align:center;top:112.0px;line-height:15px;font-weight:400;color:#000"><span style="transform:scaleX(0.7);transform-origin:center">Sr.</span></div>
<div class="t" style="left:90px;top:112.0px;line-height:15px;font-weight:400;color:#000"><span style="transform:scaleX(0.7);transform-origin:left">Item Name</span></div>
<div class="t" style="left:289px;top:112.0px;line-height:15px;font-weight:400;color:#000"><span style="transform:scaleX(0.7);transform-origin:left">Pkg</span></div>
<div class="t" style="right:564px;top:112.0px;line-height:15px;font-weight:400;color:#000"><span style="transform:scaleX(0.7);transform-origin:right">Qty</span></div>
<div class="t" style="right:519px;top:112.0px;line-height:15px;font-weight:400;color:#000"><span style="transform:scaleX(0.7);transform-origin:right">FQty</span></div>
<div class="t" style="right:485px;top:112.0px;line-height:15px;font-weight:400;color:#000"><span style="transform:scaleX(0.7);transform-origin:right">Sch</span></div>
<div class="t" style="right:473px;top:112.0px;line-height:15px;font-weight:400;color:#000"><span style="transform:scaleX(0.87);transform-origin:right">%</span></div>
<div class="t" style="right:424px;top:112.0px;line-height:15px;font-weight:400;color:#000"><span style="transform:scaleX(0.7);transform-origin:right">Net Rate</span></div>
<div class="t" style="right:358px;top:112.0px;line-height:15px;font-weight:400;color:#000"><span style="transform:scaleX(0.7);transform-origin:right">Value</span></div>
<div class="t" style="left:416.5px;width:400px;text-align:center;top:112.0px;line-height:15px;font-weight:400;color:#000"><span style="transform:scaleX(0.745);transform-origin:center">Pty PO</span></div>
<div class="t" style="left:476.5px;width:400px;text-align:center;top:112.0px;line-height:15px;font-weight:400;color:#000"><span style="transform:scaleX(0.745);transform-origin:center">Itm PO</span></div>
<div class="t" style="left:526.5px;width:400px;text-align:center;top:112.0px;line-height:15px;font-weight:400;color:#000"><span style="transform:scaleX(0.7);transform-origin:center">Qty</span></div>
<div class="t" style="left:576.5px;width:400px;text-align:center;top:112.0px;line-height:15px;font-weight:400;color:#000"><span style="transform:scaleX(0.7);transform-origin:center">Note</span></div>
<div class="t" style="right:93px;top:112.0px;line-height:15px;font-weight:400;color:#000"><span style="transform:scaleX(0.7);transform-origin:right">PO</span></div>
<div class="t" style="right:28px;top:112.0px;line-height:15px;font-weight:400;color:#000"><span style="transform:scaleX(0.7);transform-origin:right">Amount</span></div>
<div class="b" style="left:6px;top:129px;width:911px;height:1px;background:#a0a0a0"></div>
<div class="b" style="left:6px;top:107px;width:911px;height:1px;background:#a0a0a0"></div>
<div class="b" style="left:6px;top:107px;width:1px;height:468px;background:#a0a0a0"></div>
<svg class="b" style="left:12px;top:135px" width="8" height="11"><path d="M1 1 L6 5.5 L1 10 Z" fill="#333"/></svg>

<!-- scrollbar -->
<div class="b" style="left:917px;top:108px;width:1px;height:467px;background:#fafafa"></div>
<div class="b" style="left:918px;top:124px;width:15px;height:27px;background:#cdcdcd"></div>
<svg class="b" style="left:920px;top:111px" width="11" height="9"><path d="M1.5 7.5 L5.5 3.5 L9.5 7.5" stroke="#606060" stroke-width="2" fill="none"/></svg>
<svg class="b" style="left:920px;top:563px" width="11" height="9"><path d="M1.5 1.5 L5.5 5.5 L9.5 1.5" stroke="#606060" stroke-width="2" fill="none"/></svg>
</body></html>
